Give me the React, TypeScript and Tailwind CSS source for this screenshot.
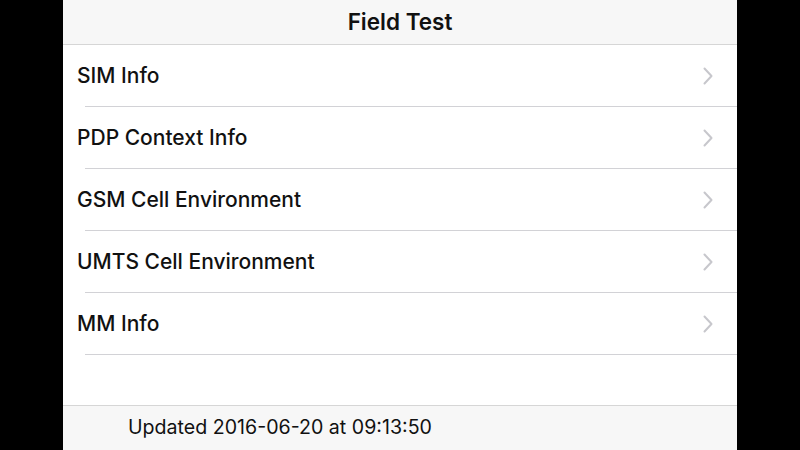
import React from 'react';

const rows = ['SIM Info', 'PDP Context Info', 'GSM Cell Environment', 'UMTS Cell Environment', 'MM Info'];

const Chevron: React.FC = () => (
    <svg width="10" height="18" viewBox="0 0 10 18" fill="none" stroke="#c7c7cc" strokeWidth={2} strokeLinecap="round" strokeLinejoin="round">
        <path d="M1.5 1.5L8.5 9L1.5 16.5" />
    </svg>
);

const App: React.FC = () => {
    return (
        <div className="flex h-[450px] w-[800px] bg-black" style={{ fontFamily: 'Inter, "Liberation Sans", sans-serif' }}>
            <div className="w-[63px] shrink-0" />
            <div className="flex w-[674px] shrink-0 flex-col bg-white">
                <div className="flex h-[45px] items-center justify-center border-b border-[#d6d6d6] bg-[#f7f7f7]">
                    <span className="text-[22.5px] font-semibold text-[#111]">Field Test</span>
                </div>
                <div className="flex-1">
                    {rows.map((label) => (
                        <div key={label}>
                            <div className="flex h-[61px] items-center justify-between pl-[14px] pr-[24px]">
                                <span className="text-[21px] font-medium text-[#111]">{label}</span>
                                <Chevron />
                            </div>
                            <div className="ml-[22px] h-px bg-[#d2d2d6]" />
                        </div>
                    ))}
                </div>
                <div className="flex h-[45px] items-center border-t border-[#d6d6d6] bg-[#f7f7f7] pl-[65px]">
                    <span className="text-[19.6px] text-[#111]">Updated 2016-06-20 at 09:13:50</span>
                </div>
            </div>
            <div className="flex-1" />
        </div>
    );
};

export default App;
